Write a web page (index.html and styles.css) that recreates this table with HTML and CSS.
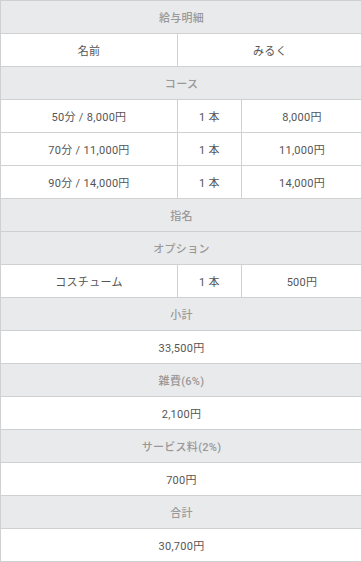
FILE: index.html
```html
<!DOCTYPE html>
<html lang="ja">
<head>
<meta charset="utf-8">
<link rel="stylesheet" href="styles.css">
</head>
<body>
<table class="slip">
  <colgroup>
    <col class="c1"><col class="c2"><col class="c3">
  </colgroup>
  <tr><th colspan="3">給与明細</th></tr>
  <tr><td>名前</td><td colspan="2">みるく</td></tr>
  <tr><th colspan="3">コース</th></tr>
  <tr><td>50分 / 8,000円</td><td>1 本</td><td>8,000円</td></tr>
  <tr><td>70分 / 11,000円</td><td>1 本</td><td>11,000円</td></tr>
  <tr><td>90分 / 14,000円</td><td>1 本</td><td>14,000円</td></tr>
  <tr><th colspan="3">指名</th></tr>
  <tr><th colspan="3">オプション</th></tr>
  <tr><td>コスチューム</td><td>1 本</td><td>500円</td></tr>
  <tr><th colspan="3">小計</th></tr>
  <tr><td colspan="3">33,500円</td></tr>
  <tr><th colspan="3">雑費(6%)</th></tr>
  <tr><td colspan="3">2,100円</td></tr>
  <tr><th colspan="3">サービス料(2%)</th></tr>
  <tr><td colspan="3">700円</td></tr>
  <tr><th colspan="3">合計</th></tr>
  <tr><td colspan="3">30,700円</td></tr>
</table>
</body>
</html>
```
FILE: styles.css
```css
html, body {
  margin: 0;
  padding: 0;
  background: #fff;
}
.slip {
  border-collapse: collapse;
  table-layout: fixed;
  width: 362px;
  font-family: Roboto, "Noto Sans CJK JP", sans-serif;
  font-size: 11px;
  letter-spacing: 0.3px;
}
.c1 { width: 177px; }
.c2 { width: 64px; }
.c3 { width: 121px; }
.slip th, .slip td {
  border: 1px solid #cfd0d2;
  height: 33px;
  padding: 0;
  text-align: center;
  vertical-align: middle;
  box-sizing: border-box;
}
.slip th {
  background: #e9eaec;
  color: #999;
  font-weight: 500;
}
.slip td {
  background: #fff;
  color: #555;
  font-weight: 400;
}
```
